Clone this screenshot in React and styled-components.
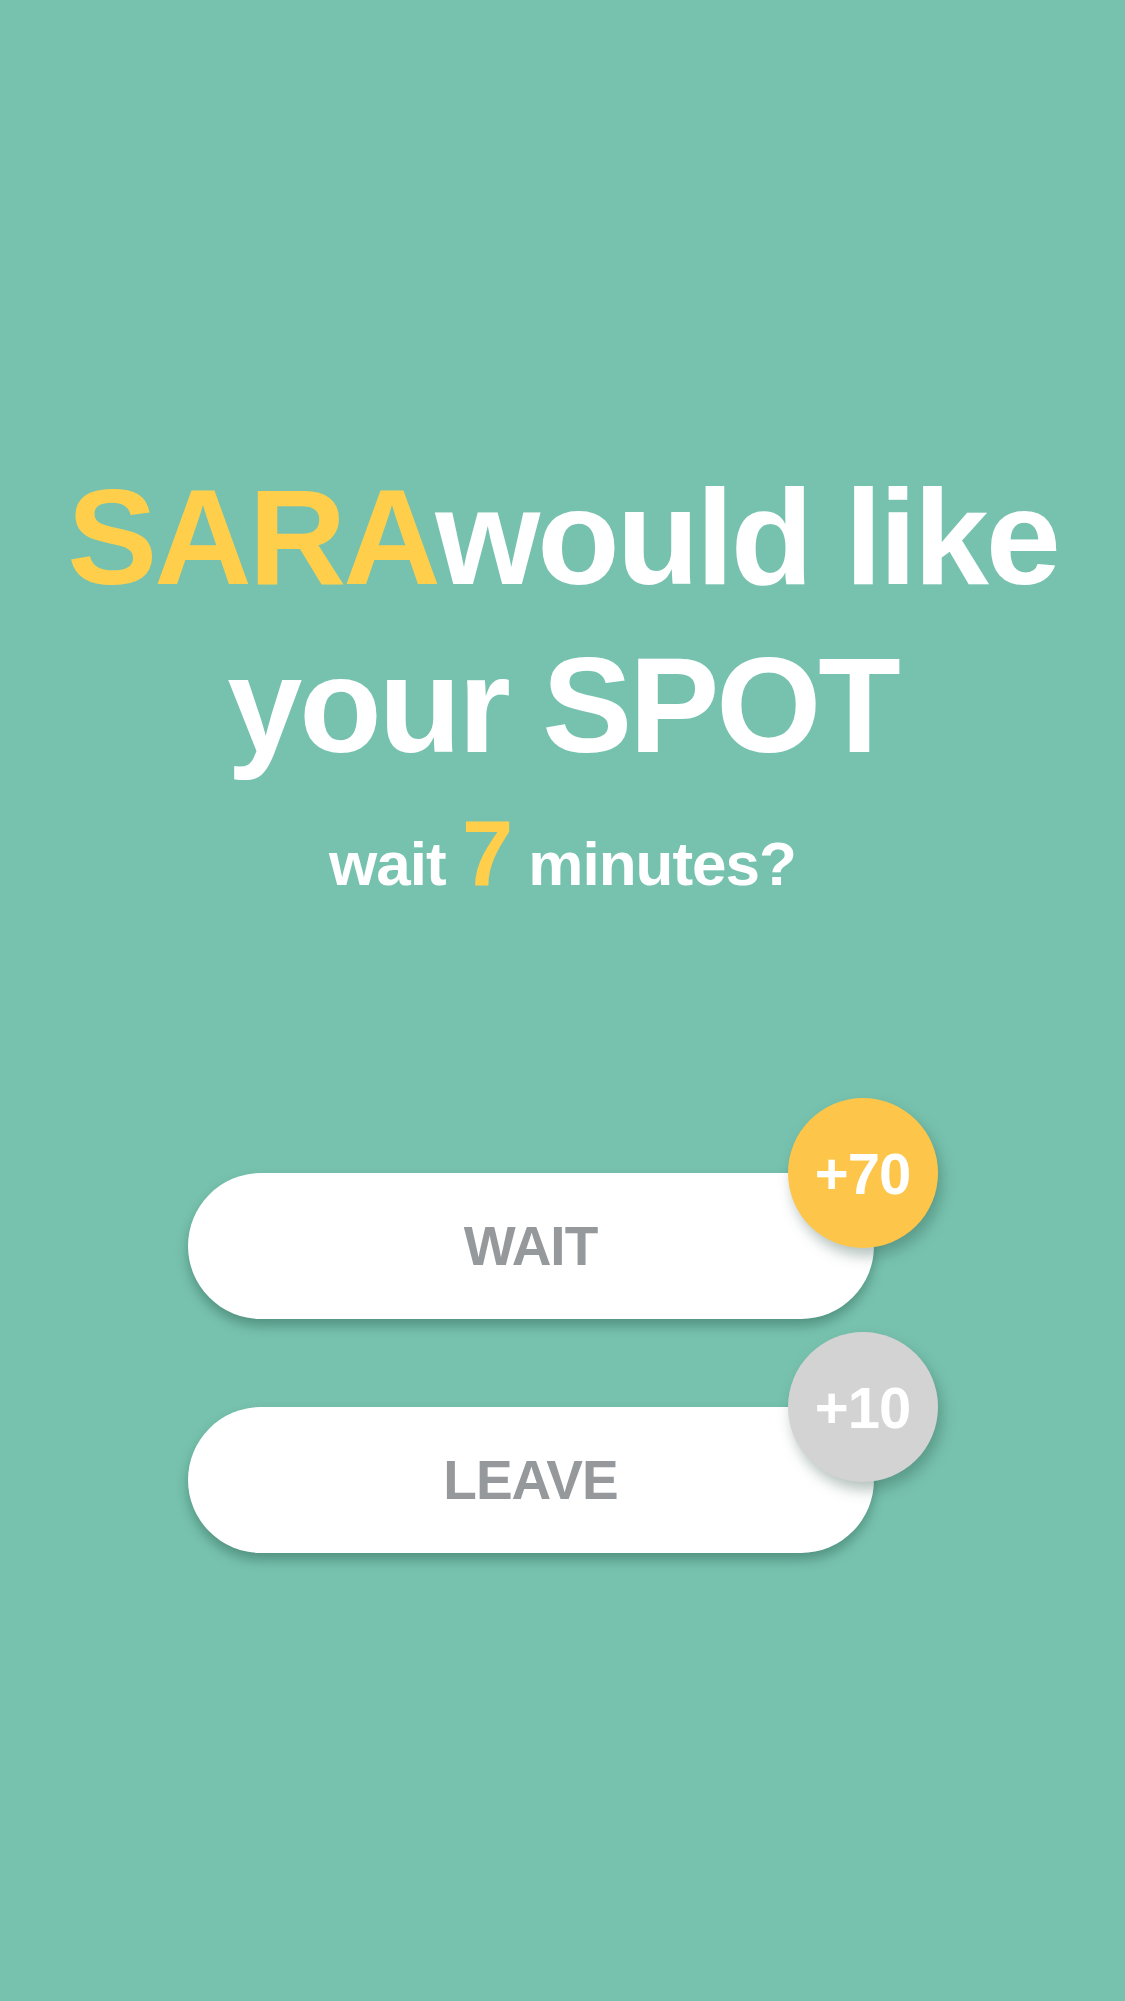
import React from 'react'
import styled, { createGlobalStyle } from 'styled-components'

const GlobalStyle = createGlobalStyle`
  html, body {
    margin: 0;
    padding: 0;
    background: #77c2ae;
  }
  body {
    font-family: "Liberation Sans", Arial, sans-serif;
  }
`

const Screen = styled.div`
  min-height: 2001px;
  background: #77c2ae;
  display: flex;
  flex-direction: column;
  align-items: center;
  padding-top: 454px;
  box-sizing: border-box;
`

const Title = styled.h1`
  margin: 0;
  font-size: 135px;
  line-height: 168px;
  font-weight: 700;
  color: #ffffff;
  letter-spacing: -3px;
  text-align: center;
`

const Name = styled.span`
  color: #ffcf4b;
`

const Subtitle = styled.p`
  margin: 34px 0 0;
  font-size: 62px;
  line-height: 80px;
  font-weight: 700;
  color: #ffffff;
  letter-spacing: -1px;
  text-align: center;
`

const Minutes = styled.span`
  color: #ffcf4b;
  font-size: 92px;
  line-height: 0;
`

const Choices = styled.div`
  margin-top: 269px;
  width: 750px;
  padding-right: 64px;
  box-sizing: border-box;
  display: flex;
  flex-direction: column;
  gap: 88px;
`

const ChoiceButton = styled.button`
  position: relative;
  height: 146px;
  width: 100%;
  border: none;
  border-radius: 73px;
  background: #ffffff;
  box-shadow: 0 7px 12px rgba(40, 90, 76, 0.45);
  font-family: "Liberation Sans", Arial, sans-serif;
  font-size: 55px;
  font-weight: 700;
  letter-spacing: -1px;
  color: #96999c;
  cursor: pointer;
  padding: 0;
`

const Badge = styled.span`
  position: absolute;
  top: -75px;
  right: -64px;
  width: 150px;
  height: 150px;
  border-radius: 50%;
  background: ${p => p.$color};
  box-shadow: 4px 8px 14px rgba(40, 80, 70, 0.35);
  display: flex;
  align-items: center;
  justify-content: center;
  color: #ffffff;
  font-size: 58px;
  font-weight: 700;
  letter-spacing: -1px;
`

const choices = [
  { label: 'WAIT', points: '+70', color: '#fdc64a' },
  { label: 'LEAVE', points: '+10', color: '#d3d3d3' },
]

export default function App() {
  return (
    <>
      <GlobalStyle />
      <Screen>
        <Title>
          <Name>SARA</Name>would like
          <br />
          your SPOT
        </Title>
        <Subtitle>
          wait <Minutes>7</Minutes> minutes?
        </Subtitle>
        <Choices>
          {choices.map(c => (
            <ChoiceButton key={c.label}>
              {c.label}
              <Badge $color={c.color}>{c.points}</Badge>
            </ChoiceButton>
          ))}
        </Choices>
      </Screen>
    </>
  )
}
